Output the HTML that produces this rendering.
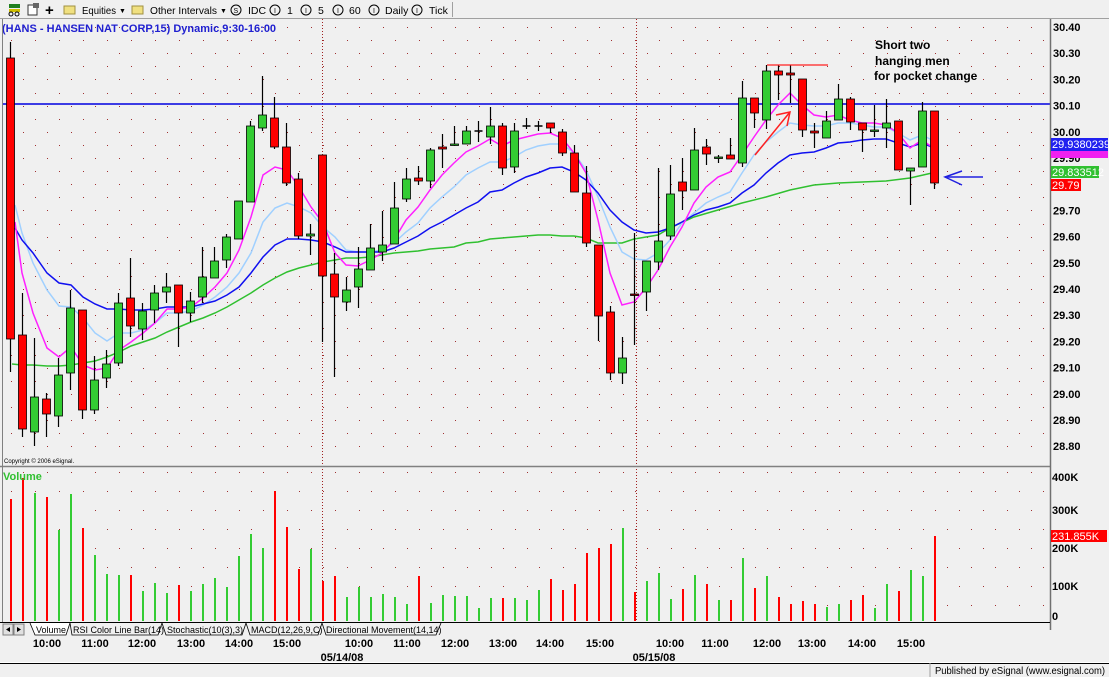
<!DOCTYPE html>
<html><head><meta charset="utf-8"><style>
html,body{margin:0;padding:0;background:#f0f0f0;}
body{width:1109px;height:677px;overflow:hidden;position:relative;font-family:"Liberation Sans",Arial,sans-serif;}
svg{position:absolute;left:0;top:0;}
</style></head><body>
<svg id="s" width="1109" height="677" viewBox="0 0 1109 677" xmlns="http://www.w3.org/2000/svg" font-family="Liberation Sans, Arial, sans-serif">
<rect x="0" y="0" width="1109" height="677" fill="#f0f0f0"/>
<rect x="0" y="0" width="1109" height="18" fill="#f0f0f0"/>
<line x1="0" y1="18.5" x2="1109" y2="18.5" stroke="#a0a0a0"/>
<rect x="9" y="4" width="11" height="4" fill="#208020"/><rect x="9" y="9" width="11" height="3" fill="#d0c000"/><circle cx="11" cy="14" r="2" fill="none" stroke="#000"/><circle cx="17" cy="14" r="2" fill="none" stroke="#000"/>
<rect x="28" y="5" width="9" height="10" fill="#fff" stroke="#333"/><rect x="33" y="3" width="6" height="5" fill="#666"/>
<text x="45" y="15" font-size="15" font-weight="bold">+</text>
<rect x="64" y="6" width="11" height="8" fill="#f0e080" stroke="#a09040"/>
<text x="82" y="14" font-size="10.5" textLength="34" lengthAdjust="spacingAndGlyphs">Equities</text><text x="119" y="13" font-size="7">▼</text>
<rect x="132" y="6" width="11" height="8" fill="#f0e080" stroke="#a09040"/>
<text x="150" y="14" font-size="10.5" textLength="67" lengthAdjust="spacingAndGlyphs">Other Intervals</text><text x="220" y="13" font-size="7">▼</text>
<g font-size="10.5"><circle cx="236" cy="10" r="5" fill="none" stroke="#000"/><text x="233.5" y="13" font-size="7">S</text><text x="248" y="14">IDC</text>
<circle cx="275" cy="10" r="5" fill="none" stroke="#000"/><text x="274" y="13" font-size="7">I</text><text x="287" y="14">1</text>
<circle cx="306" cy="10" r="5" fill="none" stroke="#000"/><text x="305" y="13" font-size="7">I</text><text x="318" y="14">5</text>
<circle cx="338" cy="10" r="5" fill="none" stroke="#000"/><text x="337" y="13" font-size="7">I</text><text x="349" y="14">60</text>
<circle cx="374" cy="10" r="5" fill="none" stroke="#000"/><text x="373" y="13" font-size="7">I</text><text x="385" y="14">Daily</text>
<circle cx="417" cy="10" r="5" fill="none" stroke="#000"/><text x="416" y="13" font-size="7">I</text><text x="429" y="14">Tick</text></g>
<line x1="452.5" y1="2" x2="452.5" y2="17" stroke="#a0a0a0"/>
<g id="grid"></g>
<line x1="322.5" y1="19" x2="322.5" y2="622" stroke="#a02020" stroke-dasharray="1,2"/>
<line x1="636.5" y1="19" x2="636.5" y2="622" stroke="#a02020" stroke-dasharray="1,2"/>
<text x="2" y="32" font-size="11" font-weight="bold" fill="#2020d0">(HANS - HANSEN NAT CORP,15) Dynamic,9:30-16:00</text>
<line x1="3" y1="104" x2="1050" y2="104" stroke="#0000e0" stroke-width="1.5"/>
<g id="mas" fill="none" stroke-width="1.5"></g>
<g id="candles"></g>
<g id="vols"></g>
<line x1="2.5" y1="19" x2="2.5" y2="623" stroke="#808080"/>
<line x1="0" y1="466.5" x2="1050" y2="466.5" stroke="#808080" stroke-width="1.5"/>
<line x1="1050.5" y1="19" x2="1050.5" y2="630" stroke="#707070" stroke-width="1.5"/>
<line x1="0" y1="622.5" x2="1050" y2="622.5" stroke="#000"/>
<text x="4" y="463" font-size="6">Copyright © 2006 eSignal.</text>
<text x="3" y="480" font-size="11" font-weight="bold" fill="#30c030">Volume</text>
<g font-size="12" font-weight="bold" fill="#000"><text x="875" y="49">Short two</text><text x="875" y="65">hanging men</text><text x="874" y="80">for pocket change</text></g>
<line x1="767" y1="65" x2="828" y2="65" stroke="#ff2020" stroke-width="1.2"/>
<line x1="755" y1="155" x2="790" y2="112" stroke="#ff2020" stroke-width="1.5"/>
<path d="M776 115 L790 112 L787 126" fill="none" stroke="#ff2020" stroke-width="1.5"/>
<line x1="945" y1="177" x2="983" y2="177" stroke="#2020e0" stroke-width="1.5"/>
<path d="M962 171 L945 177 L962 185" fill="none" stroke="#2020e0" stroke-width="1.5"/>
<g id="axis" font-size="11" font-weight="bold"></g>
<rect x="1051" y="138" width="57" height="13" fill="#2020f0"/><text x="1052" y="148" font-size="11" fill="#fff">29.9380239</text>
<rect x="1051" y="151" width="57" height="7" fill="#f020f0"/>
<rect x="1051" y="166" width="48" height="12" fill="#30c030"/><text x="1052" y="176" font-size="11" fill="#fff">29.833512</text>
<rect x="1051" y="179" width="30" height="12" fill="#ff0000"/><text x="1052" y="189" font-size="11" fill="#fff">29.79</text>
<g font-size="11" font-weight="bold"><text x="1052" y="481">400K</text><text x="1052" y="514">300K</text><text x="1052" y="552">200K</text><text x="1052" y="590">100K</text><text x="1052" y="620">0</text></g>
<rect x="1051" y="530" width="56" height="12" fill="#ff0000"/><text x="1052" y="540" font-size="11" fill="#fff">231.855K</text>
<rect x="3" y="624" width="10" height="11" fill="#e0e0e0" stroke="#808080"/><path d="M10 627 L6 629.5 L10 632Z"/>
<rect x="14" y="624" width="10" height="11" fill="#e0e0e0" stroke="#808080"/><path d="M17 627 L21 629.5 L17 632Z"/>
<g font-size="9" fill="#000">
<path d="M30 623 L35 635 L66 635 L70 623" fill="#fff" stroke="#000" stroke-width="0.8"/><text x="36" y="633">Volume</text>
<path d="M70 623 L72 635 L158 635 L162 623" fill="#f0f0f0" stroke="#000" stroke-width="0.8"/><text x="73" y="633">RSI Color Line Bar(14)</text>
<path d="M162 623 L166 635 L242 635 L246 623" fill="#f0f0f0" stroke="#000" stroke-width="0.8"/><text x="167" y="633">Stochastic(10(3),3)</text>
<path d="M246 623 L250 635 L318 635 L322 623" fill="#f0f0f0" stroke="#000" stroke-width="0.8"/><text x="251" y="633">MACD(12,26,9,C)</text>
<path d="M322 623 L326 635 L436 635 L441 623" fill="#f0f0f0" stroke="#000" stroke-width="0.8"/><text x="326" y="633">Directional Movement(14,14)</text>
</g>
<g font-size="11" font-weight="bold" text-anchor="middle">
<text x="47" y="647">10:00</text><text x="95" y="647">11:00</text><text x="142" y="647">12:00</text><text x="191" y="647">13:00</text><text x="239" y="647">14:00</text><text x="287" y="647">15:00</text>
<text x="359" y="647">10:00</text><text x="407" y="647">11:00</text><text x="455" y="647">12:00</text><text x="503" y="647">13:00</text><text x="550" y="647">14:00</text><text x="600" y="647">15:00</text>
<text x="670" y="647">10:00</text><text x="715" y="647">11:00</text><text x="767" y="647">12:00</text><text x="812" y="647">13:00</text><text x="862" y="647">14:00</text><text x="911" y="647">15:00</text>
<text x="342" y="661">05/14/08</text><text x="654" y="661">05/15/08</text>
</g>
<line x1="0" y1="663.5" x2="1109" y2="663.5" stroke="#000"/>
<line x1="0" y1="662.5" x2="1109" y2="662.5" stroke="#fff"/>
<line x1="930" y1="663" x2="930" y2="677" stroke="#a0a0a0"/>
<text x="935" y="674" font-size="10" textLength="170" lengthAdjust="spacingAndGlyphs">Published by eSignal (www.esignal.com)</text>
</svg>
<script>
var NS="http://www.w3.org/2000/svg";
function el(p,t,a){var e=document.createElementNS(NS,t);for(var k in a)e.setAttribute(k,a[k]);p.appendChild(e);return e;}
var g=document.getElementById('grid');
for(var k=0;k<33;k++){var y=27+13.1*k;if(y>462)break;for(var x=(k%2?11:23);x<1048;x+=24)el(g,'rect',{x:x,y:Math.round(y),width:1,height:1,fill:'#a03030'});}
for(var k=0;k<8;k++){var y=472+19*k;for(var x=(k%2?11:23);x<1048;x+=24)el(g,'rect',{x:x,y:y,width:1,height:1,fill:'#a03030'});}
var ax=document.getElementById('axis');
for(var k=0;k<=16;k++){var p=(30.40-k*0.1).toFixed(2);var t=el(ax,'text',{x:1053,y:27+26.2*k+4});t.textContent=p;}
var C=[
['r',58,339,42,372],['r',335,429,293,437],['g',397,432,338,446],['r',399,414,393,437],['g',375,416,358,427],['g',308,373,290,390],['r',310,410,310,419],['g',380,410,356,414],['g',364,378,350,388],['g',303,363,293,366],
['r',298,326,258,337],['g',311,329,303,340],['g',293,310,285,323],['g',287,292,273,303],['r',285,313,285,347],['g',301,313,292,322],['g',277,297,247,303],['g',261,278,247,278],['g',237,260,234,268],['g',201,239,201,239],
['g',126,202,121,202],['g',115,128,76,131],['r',118,147,97,149],['r',147,183,123,186],['r',179,236,173,239],['g',234,236,224,255],['r',155,276,155,342],['r',274,297,253,377],['g',290,302,277,311],['g',269,287,247,308],
['g',248,270,224,270],['g',245,252,211,261],['g',208,244,182,244],['g',179,199,168,202],['r',178,181,166,185],['g',150,181,148,188],['r',147,149,134,168],['g',144,145,126,146],['g',131,144,126,144],['d',131,131,121,142],
['g',126,137,107,144],['r',126,168,123,175],['g',131,167,123,173],['d',126,126,118,129],['d',126,126,121,131],['r',123,128,123,133],['r',132,153,129,156],['r',153,192,145,192],['r',193,243,166,247],['r',245,316,245,341],
['r',312,373,306,380],['g',358,373,337,384],['dr',294,294,233,345],['g',261,292,261,311],['g',241,262,168,270],['g',194,236,165,240],['r',182,191,158,210],['g',150,190,128,190],['r',147,154,139,165],['dg',157,157,155,163],
['r',155,159,138,159],['g',98,163,81,167],['r',98,113,98,128],['g',71,120,65,129],['r',71,75,65,100],['r',73,75,65,103],['r',79,130,79,137],['r',131,133,123,148],['g',121,138,111,138],['g',99,120,84,120],
['r',99,122,97,130],['r',123,130,123,152],['dg',130,130,105,137],['g',123,128,99,148],['r',121,170,121,170],['g',168,171,168,205],['g',111,167,102,167],['r',111,183,111,189]];
var cg=document.getElementById('candles');
C.forEach(function(c,i){var x=10.5+12*i;var fill=c[0]=='g'?'#33cc33':c[0]=='r'?'#ff0000':c[0]=='dg'?'#33aa33':c[0]=='dr'?'#a00000':'#000';
el(cg,'line',{x1:x,y1:c[3],x2:x,y2:c[4],stroke:'#000','stroke-width':1.2});
var h=Math.max(c[2]-c[1],1.5);
if(c[0]=='d'){el(cg,'line',{x1:x-4,y1:c[1],x2:x+4,y2:c[1],stroke:'#000','stroke-width':1.5});}
else el(cg,'rect',{x:x-4,y:c[1],width:8,height:h,fill:fill,stroke:'#000','stroke-width':0.8});});
var V=[['r',499],['r',478],['g',493],['r',497],['g',530],['g',494],['r',528],['g',555],['g',574],['g',575],['r',575],['g',591],['g',583],['g',593],['r',585],['g',591],['g',584],['g',578],['g',587],['g',556],
['g',534],['g',548],['r',491],['r',527],['r',569],['g',549],['r',581],['r',576],['g',597],['g',587],['g',597],['g',594],['g',597],['g',604],['r',576],['g',603],['g',595],['g',596],['g',596],['g',608],
['g',598],['r',598],['g',598],['g',600],['g',590],['r',579],['r',590],['r',584],['r',553],['r',548],['r',544],['g',528],['r',592],['g',581],['g',573],['g',599],['r',589],['g',575],['r',584],['g',600],
['r',600],['g',558],['r',588],['g',576],['r',597],['r',604],['r',601],['r',604],['g',607],['g',604],['r',600],['r',595],['g',608],['g',584],['r',591],['g',570],['g',576],['r',536]];
var vg=document.getElementById('vols');
V.forEach(function(v,i){var x=10+12*i;el(vg,'rect',{x:x,y:v[1],width:2,height:621-v[1],fill:v[0]=='g'?'#33cc33':'#ff0000'});});
var M={
'#30c030':"12,364 22,365 33,365 47,366 59,366 71,365 83,363 95,361 107,357 119,352 131,346 143,342 155,338 167,332 179,327 191,322 203,318 215,313 227,307 239,300 251,293 263,285 275,278 287,272 299,268 311,265 323,262 335,260 346,258 358,258 370,257 382,255 394,253 406,252 418,251 430,249 442,248 454,247 466,243 478,242 490,239 502,238 514,237 526,236 538,235 550,235 562,236 574,236 586,238 598,243 610,243 622,243 634,239 646,237 658,235 670,228 694,217 718,210 742,203 766,197 790,190 814,185 838,183 862,182 886,181 910,178 932,173",
'#a0d0ff':"15,205 22,233 33,263 47,290 59,306 71,307 83,318 95,333 107,341 119,333 131,333 143,330 155,323 167,313 179,313 191,311 203,305 215,297 227,287 239,273 251,253 263,222 275,208 287,203 299,207 311,213 323,227 335,237 346,250 358,252 370,252 382,250 394,243 406,232 418,223 430,208 442,197 454,187 466,175 478,168 490,162 502,162 514,157 526,150 538,146 550,144 562,144 574,153 586,170 598,197 610,227 622,252 634,259 646,260 658,253 670,240 682,223 694,213 706,203 718,197 730,192 742,173 754,155 766,142 778,132 790,123 802,125 814,126 826,126 838,123 850,123 862,125 874,127 886,127 898,133 910,140 922,135 932,140",
'#1010f0':"15,228 22,240 33,253 47,273 59,283 71,285 83,297 95,304 107,309 119,309 131,310 143,310 155,309 167,307 179,307 191,307 203,304 215,301 227,295 239,287 251,273 263,257 275,245 287,239 299,239 311,240 323,242 335,247 346,252 358,252 370,252 382,252 394,248 406,242 418,236 430,228 442,222 454,215 466,208 478,202 490,192 502,190 514,183 526,177 538,173 550,168 562,167 574,172 586,180 598,193 610,210 622,222 634,230 646,233 658,232 670,228 682,222 694,215 706,210 718,207 730,203 742,193 754,185 766,173 778,163 790,155 802,153 814,152 826,148 838,143 850,142 862,140 874,139 886,139 898,143 910,147 922,143 932,147",
'#ff20ff':"15,222 22,273 33,313 47,348 59,357 71,347 83,365 95,370 107,368 119,350 131,342 143,333 155,323 167,309 179,309 191,307 203,298 215,287 227,273 239,250 251,217 263,175 275,167 287,170 299,187 311,207 323,223 335,253 346,265 358,266 370,260 382,253 394,240 406,220 418,207 430,190 442,175 454,163 466,152 478,146 490,139 502,146 514,140 526,137 538,134 550,133 562,138 574,153 586,173 598,220 610,273 622,305 634,302 646,288 658,270 670,247 682,227 694,203 706,187 718,177 730,172 742,155 754,137 766,120 778,105 790,93 802,105 814,115 826,117 838,115 850,120 862,123 874,123 886,125 898,133 910,148 922,140 932,147"};
var mg=document.getElementById('mas');
for(var c in M)el(mg,'polyline',{points:M[c],stroke:c});
</script>
</body></html>
